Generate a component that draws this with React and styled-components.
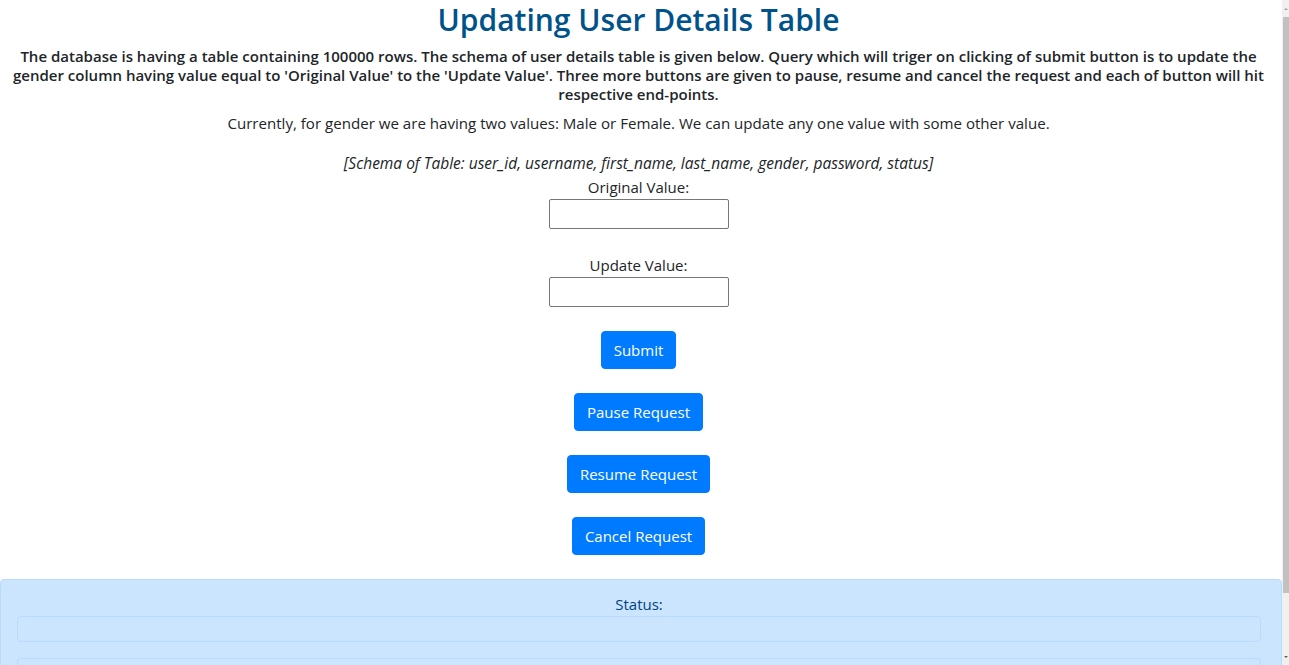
import React from "react";
import styled, { createGlobalStyle } from "styled-components";

const GlobalStyle = createGlobalStyle`
  html, body {
    margin: 0;
    padding: 0;
    background: #fff;
  }
  body {
    font-family: "Open Sans", "Noto Sans", sans-serif;
    font-size: 15px;
    line-height: 24px;
    color: #212529;
  }
  * {
    box-sizing: border-box;
  }
`;

const Page = styled.div`
  display: flex;
  flex-direction: column;
  align-items: center;
  text-align: center;
  padding: 1px 5px 0 0;
  margin-right: 7px;
`;

const Intro = styled.div`
  padding: 0 8px;
`;

const Title = styled.h2`
  margin: 0 0 8px;
  font-size: 30px;
  font-weight: 600;
  line-height: 38px;
  color: #00538a;
`;

const Lead = styled.h6`
  margin: 0 0 7px;
  font-size: 15px;
  font-weight: 600;
  line-height: 19px;
`;

const Text = styled.p`
  margin: 0 0 ${(p) => (p.$tight ? "0" : "16px")};
  font-size: ${(p) => (p.$italic ? "15.5px" : "15.1px")};
  line-height: 24px;
  font-style: ${(p) => (p.$italic ? "italic" : "normal")};
`;

const Form = styled.div`
  display: flex;
  flex-direction: column;
  align-items: center;
  gap: 24px;
  margin-bottom: 24px;
`;

const Field = styled.label`
  display: flex;
  flex-direction: column;
  align-items: center;
  font-size: 15px;
  line-height: 24px;
`;

const Input = styled.input`
  width: 180px;
  height: 30px;
  border: 1px solid #767676;
  border-radius: 2px;
  font: inherit;
  padding: 0 4px;
`;

const Button = styled.button`
  background-color: #007bff;
  color: #fff;
  border: 1px solid #007bff;
  border-radius: 4px;
  padding: 6px 12px;
  font-family: inherit;
  font-size: 15px;
  line-height: 24px;
  cursor: pointer;
`;

const StatusPanel = styled.div`
  align-self: stretch;
  margin-right: -5px;
  background-color: #cce5ff;
  border: 1px solid #b8daff;
  border-radius: 4px;
  padding: 12px 20px 12px 16px;
  color: #004085;
  display: flex;
  flex-direction: column;
  gap: 16px;
`;

const StatusLabel = styled.div`
  font-size: 15px;
  line-height: 24px;
  margin-bottom: -16px;
`;

const StatusBox = styled.div`
  height: 26px;
  border: 1px solid #b8daff;
  border-radius: 4px;
`;

const ScrollTrack = styled.div`
  position: fixed;
  top: 0;
  right: 0;
  bottom: 0;
  width: 7px;
  background: #f0f0f0;
  display: flex;
  flex-direction: column;
  align-items: center;
`;

const ScrollArrow = styled.div`
  height: 17px;
  flex: none;
  display: flex;
  align-items: center;
  justify-content: center;
  &::before {
    content: "";
    border-left: 2px solid transparent;
    border-right: 2px solid transparent;
    ${(p) => (p.$down ? "border-top: 2px solid #606060;" : "border-bottom: 2px solid #a0a0a0;")}
  }
`;

const ScrollThumb = styled.div`
  width: 6px;
  height: 576px;
  background: #c1c1c1;
  flex: none;
`;

const ScrollSpace = styled.div`
  flex: 1;
`;

export default function App() {
  return (
    <>
      <GlobalStyle />
      <Page>
        <Intro>
          <Title>Updating User Details Table</Title>
          <Lead>
            The database is having a table containing 100000 rows. The schema of user details
            table is given below. Query which will triger on clicking of submit button is to
            update the gender column having value equal to 'Original Value' to the 'Update
            Value'. Three more buttons are given to pause, resume and cancel the request and
            each of button will hit respective end-points.
          </Lead>
          <Text>
            Currently, for gender we are having two values: Male or Female. We can update any
            one value with some other value.
          </Text>
          <Text $italic $tight>
            [Schema of Table: user_id, username, first_name, last_name, gender, password, status]
          </Text>
        </Intro>
        <Form>
          <Field>
            Original Value:
            <Input type="text" />
          </Field>
          <Field>
            Update Value:
            <Input type="text" />
          </Field>
          <Button>Submit</Button>
          <Button>Pause Request</Button>
          <Button>Resume Request</Button>
          <Button>Cancel Request</Button>
        </Form>
        <StatusPanel>
          <StatusLabel>Status:</StatusLabel>
          <StatusBox />
          <StatusBox />
          <StatusBox />
        </StatusPanel>
      </Page>
      <ScrollTrack>
        <ScrollArrow />
        <ScrollThumb />
        <ScrollSpace />
        <ScrollArrow $down />
      </ScrollTrack>
    </>
  );
}
